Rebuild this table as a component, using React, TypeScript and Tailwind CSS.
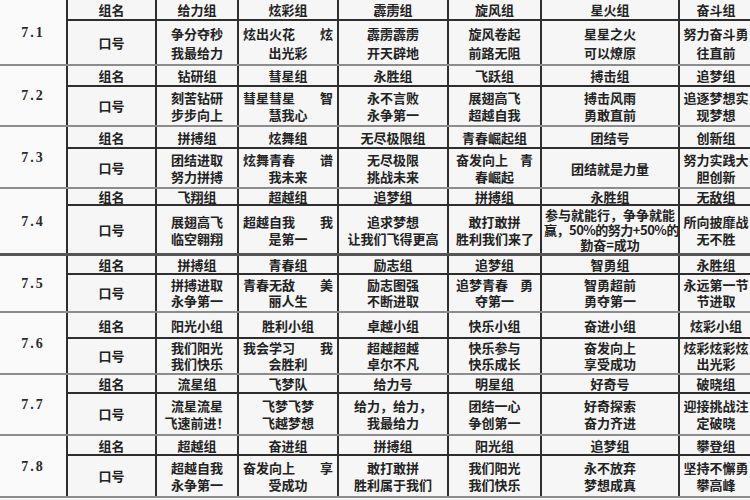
import React from "react";

type Group = {
  date: string;
  h1: number;
  h2: number;
  sep: string;
  names: string[];
  slogans: string[];
  lead?: number;
};

const groups: Group[] = [
  {
    date: "7.1",
    h1: 21,
    h2: 43,
    sep: "border-b-2 border-[#8c8c8c]",
    names: ["给力组", "炫彩组", "霹雳组", "旋风组", "星火组", "奋斗组"],
    slogans: ["争分夺秒|我最给力", "炫出火花^炫|出光彩", "霹雳霹雳|开天辟地", "旋风卷起|前路无阻", "星星之火|可以燎原", "努力奋斗勇|往直前"],
    lead: 19,
  },
  {
    date: "7.2",
    h1: 21,
    h2: 38,
    sep: "border-b-2 border-[#8c8c8c]",
    names: ["钻研组", "彗星组", "永胜组", "飞跃组", "搏击组", "追梦组"],
    slogans: ["刻苦钻研|步步向上", "彗星彗星^智|慧我心", "永不言败|永争第一", "展翅高飞|超越自我", "搏击风雨|勇敢直前", "追逐梦想实|现梦想"],
  },
  {
    date: "7.3",
    h1: 22,
    h2: 38,
    sep: "border-b-2 border-[#8c8c8c]",
    names: ["拼搏组", "炫舞组", "无尽极限组", "青春崛起组", "团结号", "创新组"],
    slogans: ["团结进取|努力拼搏", "炫舞青春^谱|我未来", "无尽极限|挑战未来", "奋发向上^青|春崛起", "团结就是力量", "努力实践大|胆创新"],
  },
  {
    date: "7.4",
    h1: 17,
    h2: 47,
    sep: "border-b-[3px] border-[#555]",
    names: ["飞翔组", "超越组", "追梦组", "拼搏组", "永胜组", "无敌组"],
    slogans: ["展翅高飞|临空翱翔", "超越自我^我|是第一", "追求梦想|让我们飞得更高", "敢打敢拼|胜利我们来了", "参与就能行，争争就能|赢，50%的努力+50%的|勤奋=成功", "所向披靡战|无不胜"],
  },
  {
    date: "7.5",
    h1: 19,
    h2: 36,
    sep: "border-b-2 border-[#8c8c8c]",
    names: ["拼搏组", "青春组", "励志组", "追梦组", "智勇组", "永胜组"],
    slogans: ["拼搏进取|永争第一", "青春无敌^美|丽人生", "励志图强|不断进取", "追梦青春^勇|夺第一", "智勇超前|勇夺第一", "永远第一节|节进取"],
    lead: 16,
  },
  {
    date: "7.6",
    h1: 26,
    h2: 34,
    sep: "border-b-2 border-[#8c8c8c]",
    names: ["阳光小组", "胜利小组", "卓越小组", "快乐小组", "奋进小组", "炫彩小组"],
    slogans: ["我们阳光|我们快乐", "我会学习^我|会胜利", "超越超越|卓尔不凡", "快乐参与|快乐成长", "奋发向上|享受成功", "炫彩炫彩炫|出光彩"],
    lead: 16,
  },
  {
    date: "7.7",
    h1: 19,
    h2: 40,
    sep: "border-b-2 border-[#8c8c8c]",
    names: ["流星组", "飞梦队", "给力号", "明星组", "好奇号", "破晓组"],
    slogans: ["流星流星|飞速前进！", "飞梦飞梦|飞越梦想", "给力，给力，|我最给力", "团结一心|争创第一", "好奇探索|奋力齐进", "迎接挑战注|定破晓"],
  },
  {
    date: "7.8",
    h1: 20,
    h2: 40,
    sep: "border-b-2 border-[#8c8c8c]",
    names: ["超越组", "奋进组", "拼搏组", "阳光组", "追梦组", "攀登组"],
    slogans: ["超越自我|永争第一", "奋发向上^享|受成功", "敢打敢拼|胜利属于我们", "我们阳光|我们快乐", "永不放弃|梦想成真", "坚持不懈勇|攀高峰"],
  },
];

const colPad = ["px-[2px]", "px-[4px]", "px-[2px]", "px-[7px]", "px-[2px]", "px-[1px]"];

function Slogan({ text, col, lead }: { text: string; col: number; lead: number }) {
  const lines = text.split("|");
  return (
    <div
      className={`w-full flex flex-col ${colPad[col]} whitespace-nowrap`}
      style={{ lineHeight: `${lead}px` }}
    >
      {lines.map((ln, i) => {
        if (ln.includes("^")) {
          const [a, b] = ln.split("^");
          return (
            <div key={i} className="flex justify-between">
              <span>{a}</span>
              <span>{b}</span>
            </div>
          );
        }
        return (
          <div key={i} className={`text-center ${/\d/.test(ln) ? "tracking-[-0.5px]" : ""}`}>
            {ln}
          </div>
        );
      })}
    </div>
  );
}

export default function App() {
  return (
    <div
      className="w-[750px] h-[500px] overflow-hidden bg-[#f6f6f6] text-[#222]"
      style={{ fontFamily: '"Noto Sans CJK SC", "Noto Sans", sans-serif' }}
    >
      <div className="w-[752px] flex flex-col">
        {groups.map((g) => (
          <div
            key={g.date}
            className={`grid grid-cols-[66px_89px_82px_100px_110px_93px_138px_74px] ${g.sep}`}
            style={{ gridTemplateRows: `${g.h1}px ${g.h2}px` }}
          >
            <div className="row-span-2 flex items-center justify-center bg-[#fafafa]">
              <span
                className="text-[14px] font-bold tracking-[2px] text-[#2a2a2a]"
                style={{ fontFamily: '"Liberation Serif", serif' }}
              >
                {g.date}
              </span>
            </div>
            <div className="border-l-2 border-b-2 border-[#2e2e2e] flex items-center justify-center text-[13px] font-bold leading-none">
              组名
            </div>
            {g.names.map((n, i) => (
              <div
                key={i}
                className="border-l-2 border-b-2 border-[#2e2e2e] flex items-center justify-center text-[13px] font-bold whitespace-nowrap leading-none"
              >
                {n}
              </div>
            ))}
            <div className="border-l-2 border-[#2e2e2e] flex items-center justify-center text-[13px] font-bold">
              口号
            </div>
            {g.slogans.map((s, i) => (
              <div
                key={i}
                className="border-l-2 border-[#2e2e2e] flex items-center text-[13px] font-bold"
              >
                <Slogan text={s} col={i} lead={s.split("|").length > 2 ? 15 : g.lead ?? 17} />
              </div>
            ))}
          </div>
        ))}
      </div>
    </div>
  );
}
